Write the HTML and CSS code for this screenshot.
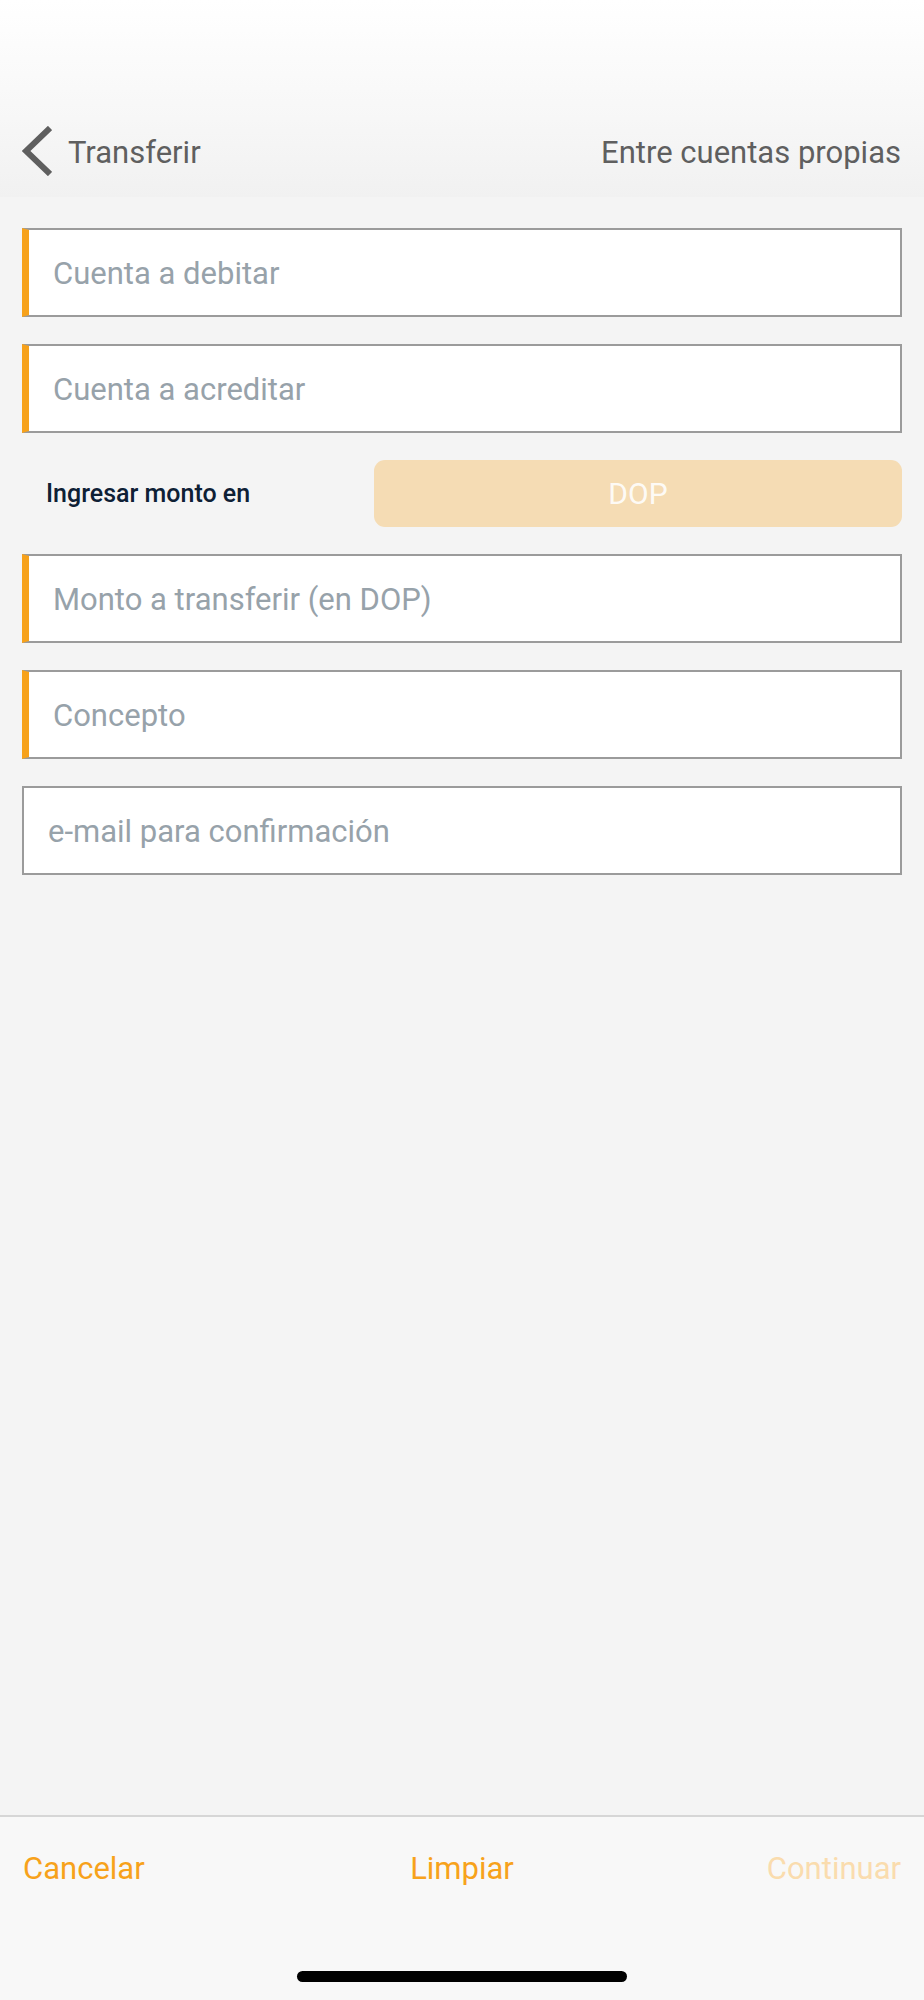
FILE: index.html
```html
<!DOCTYPE html>
<html lang="es">
<head>
    <meta charset="UTF-8">
    <meta name="viewport" content="width=device-width, initial-scale=1.0">
    <title>Transferir - Entre cuentas propias</title>
    <link rel="stylesheet" href="styles.css">
</head>
<body>
    <header class="topbar">
        <div class="topbar-left">
            <svg class="back-icon" width="30" height="50" viewBox="0 0 30 50">
                <polyline points="28,2 4,25 28,48" fill="none" stroke="#5f5f5f" stroke-width="6"/>
            </svg>
            <span class="topbar-title">Transferir</span>
        </div>
        <span class="topbar-sub">Entre cuentas propias</span>
    </header>

    <main class="form">
        <div class="field required"><span class="placeholder">Cuenta a debitar</span></div>
        <div class="field required"><span class="placeholder">Cuenta a acreditar</span></div>

        <div class="currency-row">
            <span class="currency-label">Ingresar monto en</span>
            <button class="currency-btn" disabled>DOP</button>
        </div>

        <div class="field required"><span class="placeholder">Monto a transferir (en DOP)</span></div>
        <div class="field required"><span class="placeholder">Concepto</span></div>
        <div class="field"><span class="placeholder">e-mail para confirmación</span></div>
    </main>

    <footer class="actions">
        <div class="actions-row">
            <a class="action action-left">Cancelar</a>
            <a class="action action-center">Limpiar</a>
            <a class="action action-right disabled">Continuar</a>
        </div>
        <div class="home-indicator"></div>
    </footer>
</body>
</html>
```

FILE: styles.css
```css
body {
    font-family: Roboto, "Liberation Sans", sans-serif;
    margin: 0;
    padding: 0;
    background-color: #f4f4f4;
    min-height: 2000px;
    display: flex;
    flex-direction: column;
}
.topbar {
    height: 197px;
    box-sizing: border-box;
    padding: 126px 23px 0 22px;
    background: linear-gradient(to bottom, #ffffff 0%, #f7f7f7 60%, #f1f1f1 100%);
    display: flex;
    justify-content: space-between;
    align-items: flex-start;
    color: #5f5f5f;
    font-size: 31px;
}
.topbar-left {
    display: flex;
    align-items: flex-start;
    gap: 16px;
}
.back-icon {
    display: block;
}
.topbar-title,
.topbar-sub {
    line-height: 52px;
    padding-top: 1px;
}
.form {
    flex: 1;
    padding: 31px 22px 0;
    display: flex;
    flex-direction: column;
    gap: 27px;
}
.field {
    height: 89px;
    box-sizing: border-box;
    background: #ffffff;
    border: 2px solid #9b9b9b;
    padding: 2px 24px 0;
    display: flex;
    align-items: center;
}
.field.required {
    border-left: 7px solid #f7a21b;
}
.placeholder {
    color: #97a2aa;
    font-size: 31px;
}
.currency-row {
    display: grid;
    grid-template-columns: 352px 1fr;
    align-items: center;
    height: 67px;
}
.currency-label {
    padding-left: 24px;
    font-size: 25px;
    font-weight: 500;
    color: #0e2035;
}
.currency-btn {
    height: 67px;
    border: none;
    border-radius: 11px;
    background-color: #f5dcb4;
    color: rgba(255, 255, 255, 0.9);
    font-family: inherit;
    font-size: 30px;
    cursor: pointer;
}
.actions {
    height: 185px;
    box-sizing: border-box;
    border-top: 2px solid #d6d6d6;
    background-color: #f8f8f8;
    padding-top: 32px;
}
.actions-row {
    display: grid;
    grid-template-columns: 1fr auto 1fr;
    padding: 0 23px;
    line-height: 40px;
}
.action {
    color: #f7a21b;
    font-size: 31px;
    cursor: pointer;
}
.action-left {
    justify-self: start;
}
.action-right {
    justify-self: end;
}
.action.disabled {
    color: #fadcae;
}
.home-indicator {
    width: 330px;
    height: 11px;
    margin: 82px auto 0;
    border-radius: 6px;
    background-color: #000000;
}
```
